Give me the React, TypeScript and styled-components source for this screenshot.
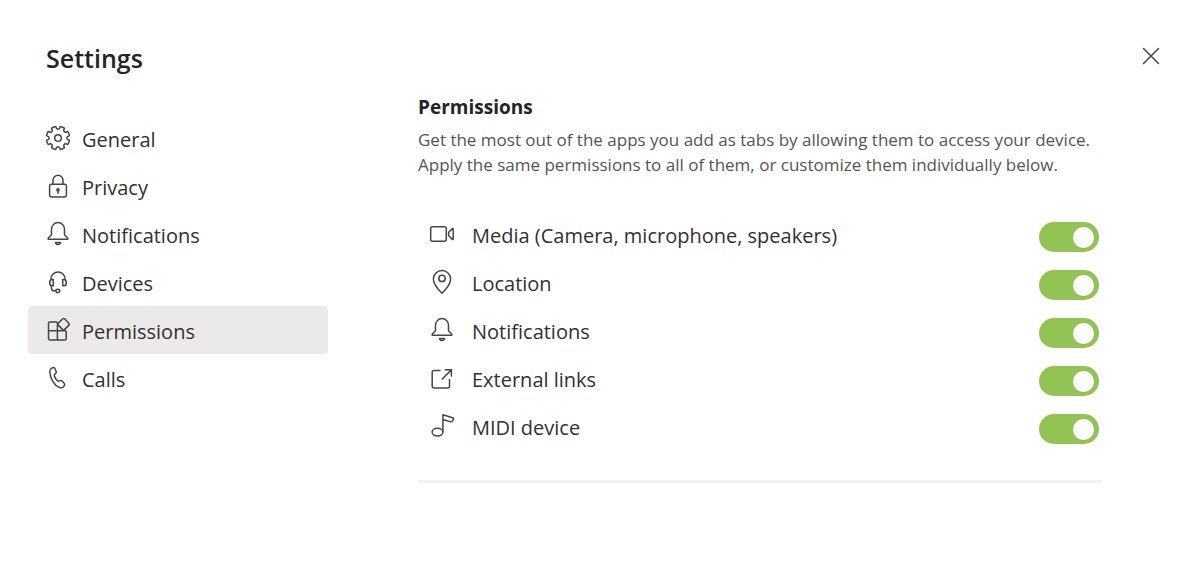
import React, { useState } from "react";
import styled, { createGlobalStyle } from "styled-components";

const GlobalStyle = createGlobalStyle`
  *, *::before, *::after { box-sizing: border-box; }
  body {
    margin: 0;
    background: #fff;
    color: #323130;
    font-family: "Open Sans", "Noto Sans", sans-serif;
    font-size: 20px;
    line-height: 28px;
  }
`;

const Dialog = styled.div`
  padding: 40px 28px;
`;

const Header = styled.header`
  display: flex;
  justify-content: space-between;
  align-items: flex-start;
  height: 52px;
  padding-left: 18px;
`;

const Title = styled.h1`
  margin: 0;
  font-size: 25px;
  line-height: 36px;
  font-weight: 600;
  color: #252423;
`;

const CloseButton = styled.button`
  display: grid;
  place-items: center;
  width: 38px;
  height: 32px;
  padding: 0;
  border: 0;
  background: none;
  color: #444;
  cursor: pointer;
`;

const Body = styled.div`
  display: grid;
  grid-template-columns: 300px minmax(0, 1fr);
  column-gap: 90px;
  padding-right: 68px;
`;

const Nav = styled.nav`
  display: flex;
  flex-direction: column;
  padding-top: 22px;
`;

const NavItem = styled.button<{ $active: boolean }>`
  display: flex;
  align-items: center;
  gap: 10px;
  height: 48px;
  padding: 0 16px;
  border: 0;
  border-radius: 4px;
  background: ${(p) => (p.$active ? "#ebeae9" : "transparent")};
  color: inherit;
  font: inherit;
  text-align: left;
  cursor: pointer;
`;

const Label = styled.span`
  padding-top: 4px;
`;

const Panel = styled.main`
  min-width: 0;
  padding-top: 1px;
`;

const PanelTitle = styled.h2`
  margin: 0;
  font-size: 19px;
  line-height: 28px;
  font-weight: 700;
  color: #252423;
`;

const Description = styled.p`
  margin: 6px 0 0;
  font-size: 17px;
  line-height: 25px;
  color: #565452;
`;

const Rows = styled.div`
  margin-top: 33px;
  padding-bottom: 30px;
  border-bottom: 3px solid #f3f2f1;
`;

const Row = styled.label`
  display: flex;
  align-items: center;
  height: 48px;
  padding: 0 3px 0 10px;
  gap: 16px;
  cursor: pointer;
`;

const Toggle = styled.input`
  appearance: none;
  flex: none;
  width: 60px;
  height: 30px;
  margin: 6px 0 0 auto;
  padding: 5px 4px 4px;
  border-radius: 15px;
  background: #c8c6c4;
  cursor: pointer;

  &::before {
    content: "";
    display: block;
    width: 21px;
    height: 21px;
    border-radius: 50%;
    background: #fff;
  }

  &:checked {
    background: #92c353;
  }

  &:checked::before {
    margin-left: 30px;
  }
`;

const Glyph = styled.svg`
  flex: none;
  display: block;
  fill: none;
  stroke: #484644;
  stroke-width: 1.5;
  stroke-linecap: round;
  stroke-linejoin: round;
`;

/* Closed outline through the midpoints of the given polar points, eight teeth. */
function gearPath(cx: number, cy: number): string {
  const pts: [number, number][] = [];
  for (let i = 0; i < 8; i++) {
    const base = i * 45 + 22.5;
    for (const [da, r] of [[-13, 11.9], [0, 11.7], [13, 11.9], [12, 9.4], [22.5, 8.9], [33, 9.4]]) {
      const a = ((base + da) * Math.PI) / 180;
      pts.push([cx + r * Math.cos(a), cy + r * Math.sin(a)]);
    }
  }
  const mid = (a: [number, number], b: [number, number]) =>
    `${((a[0] + b[0]) / 2).toFixed(2)} ${((a[1] + b[1]) / 2).toFixed(2)}`;
  const start = mid(pts[pts.length - 1], pts[0]);
  const segs = pts.map((p, i) => `Q${p[0].toFixed(2)} ${p[1].toFixed(2)} ${mid(p, pts[(i + 1) % pts.length])}`);
  return `M${start}${segs.join("")}Z`;
}

const icons = {
  gear: (
    <>
      <path d={gearPath(14, 14)} />
      <circle cx="14" cy="14" r="3.3" />
    </>
  ),
  lock: (
    <>
      <rect x="5.6" y="12.3" width="16.8" height="12.6" rx="1.6" />
      <path d="M9 12.2V8.2a5 5 0 0 1 10 0v4M14 18.6v2.6" />
      <circle cx="14" cy="17.8" r="1.1" />
    </>
  ),
  bell: (
    <>
      <path d="M7.5 14.8V9.1a6.5 6.5 0 0 1 13 0v5.7l3 3c.8.8.4 1.5-.5 1.5H5c-.9 0-1.3-.7-.5-1.5z" />
      <path d="M11.4 22.6h5.2c-.4 1.3-1.3 2-2.6 2s-2.2-.7-2.6-2z" />
    </>
  ),
  headset: (
    <>
      <path d="M7 11.8V11a7 7 0 0 1 14 0v.8" />
      <path d="M9.3 11.6v6.2H8.2c-1.6 0-2.5-1.3-2.5-3.1s.9-3.1 2.5-3.1zM18.7 11.6v6.2h1.1c1.6 0 2.5-1.3 2.5-3.1s-.9-3.1-2.5-3.1z" />
      <path d="M7.4 18v1.9c0 1.9 1 2.9 2.8 2.9h1.6" />
      <ellipse cx="13.8" cy="22.9" rx="1.9" ry="1.6" />
    </>
  ),
  apps: (
    <>
      <path d="M13.4 14.7V7.1c0-.8-.4-1.2-1.2-1.2H5.7c-.7 0-1.2.5-1.2 1.2v15.5c0 .9.5 1.4 1.3 1.4h15.1c.8 0 1.3-.5 1.3-1.3v-6.8c0-.8-.4-1.2-1.2-1.2zM13.4 14.7V24M4.5 14.7h8.9" />
      <path d="M18.8 2.8a1.2 1.2 0 0 1 1.7 0l4.5 4.6a1.2 1.2 0 0 1 0 1.7l-4.6 4.5a1.2 1.2 0 0 1-1.7 0l-4.5-4.5a1.2 1.2 0 0 1 0-1.7z" />
    </>
  ),
  phone: (
    <path d="M7.2 4.5l1.2-.7c1-.5 2-.2 2.5.7l1.2 2.6c.4.9.2 1.7-.4 2.3l-1.1 1.1c-.3.4-.4.7-.3 1.2.5 1.8 1.6 3.6 3.1 5.1.4.4.8.4 1.2.3l1.5-.5c.9-.3 1.7-.1 2.3.6l1.8 2.2c.7.9.6 1.9-.2 2.7l-.9.9c-1 .9-2.3 1-3.6.5C10.3 21.5 6.4 14.8 5.8 8c-.1-1.5.2-2.7 1.4-3.5z" />
  ),
  camera: (
    <>
      <rect x="2.7" y="6.7" width="15.6" height="14.6" rx="2" />
      <path d="M25.2 9v10c0 .5-.4.7-.8.4l-3.3-3.2c-.7-.7-.7-3.7 0-4.4l3.3-3.2c.4-.3.8-.1.8.4z" />
    </>
  ),
  pin: (
    <>
      <path d="M14 25.3C8.6 20 5.4 15.8 5.4 11a8.6 8.6 0 0 1 17.2 0c0 4.8-3.2 9-8.6 14.3z" />
      <circle cx="14" cy="10.4" r="3.2" />
    </>
  ),
  external: (
    <>
      <path d="M12 6.6H6.2c-1.3 0-2 .7-2 2v13.3c0 1.3.7 2 2 2H19.5c1.3 0 2-.7 2-2V15.5" />
      <path d="M14.2 15L23.3 5.9M17.2 5.7h6.2V12" />
    </>
  ),
  note: (
    <>
      <ellipse cx="9.5" cy="20.1" rx="5.4" ry="3.9" />
      <path d="M14.9 20V2.8l9.7 2.9c.7.2 1 .8.8 1.5-.5 1.8-1.7 2.9-3.4 2.4L14.9 7.5" />
    </>
  ),
};

type IconName = keyof typeof icons;

function Icon({ name }: { name: IconName }) {
  return (
    <Glyph width="28" height="28" viewBox="0 0 28 28" aria-hidden="true">
      {icons[name]}
    </Glyph>
  );
}

const sections: { label: string; icon: IconName }[] = [
  { label: "General", icon: "gear" },
  { label: "Privacy", icon: "lock" },
  { label: "Notifications", icon: "bell" },
  { label: "Devices", icon: "headset" },
  { label: "Permissions", icon: "apps" },
  { label: "Calls", icon: "phone" },
];

const permissions: { label: string; icon: IconName }[] = [
  { label: "Media (Camera, microphone, speakers)", icon: "camera" },
  { label: "Location", icon: "pin" },
  { label: "Notifications", icon: "bell" },
  { label: "External links", icon: "external" },
  { label: "MIDI device", icon: "note" },
];

export default function App() {
  const [active, setActive] = useState("Permissions");
  return (
    <>
      <GlobalStyle />
      <Dialog>
        <Header>
          <Title>Settings</Title>
          <CloseButton type="button" aria-label="Close">
            <Glyph width="18" height="18" viewBox="0 0 18 18" aria-hidden="true">
              <path d="M1.5 1.5l15 15M16.5 1.5l-15 15" />
            </Glyph>
          </CloseButton>
        </Header>
        <Body>
          <Nav>
            {sections.map((s) => (
              <NavItem key={s.label} type="button" $active={s.label === active} onClick={() => setActive(s.label)}>
                <Icon name={s.icon} />
                <Label>{s.label}</Label>
              </NavItem>
            ))}
          </Nav>
          <Panel>
            <PanelTitle>Permissions</PanelTitle>
            <Description>
              Get the most out of the apps you add as tabs by allowing them to access your device. Apply the same
              permissions to all of them, or customize them individually below.
            </Description>
            <Rows>
              {permissions.map((p) => (
                <Row key={p.label}>
                  <Icon name={p.icon} />
                  <Label>{p.label}</Label>
                  <Toggle type="checkbox" role="switch" defaultChecked />
                </Row>
              ))}
            </Rows>
          </Panel>
        </Body>
      </Dialog>
    </>
  );
}
